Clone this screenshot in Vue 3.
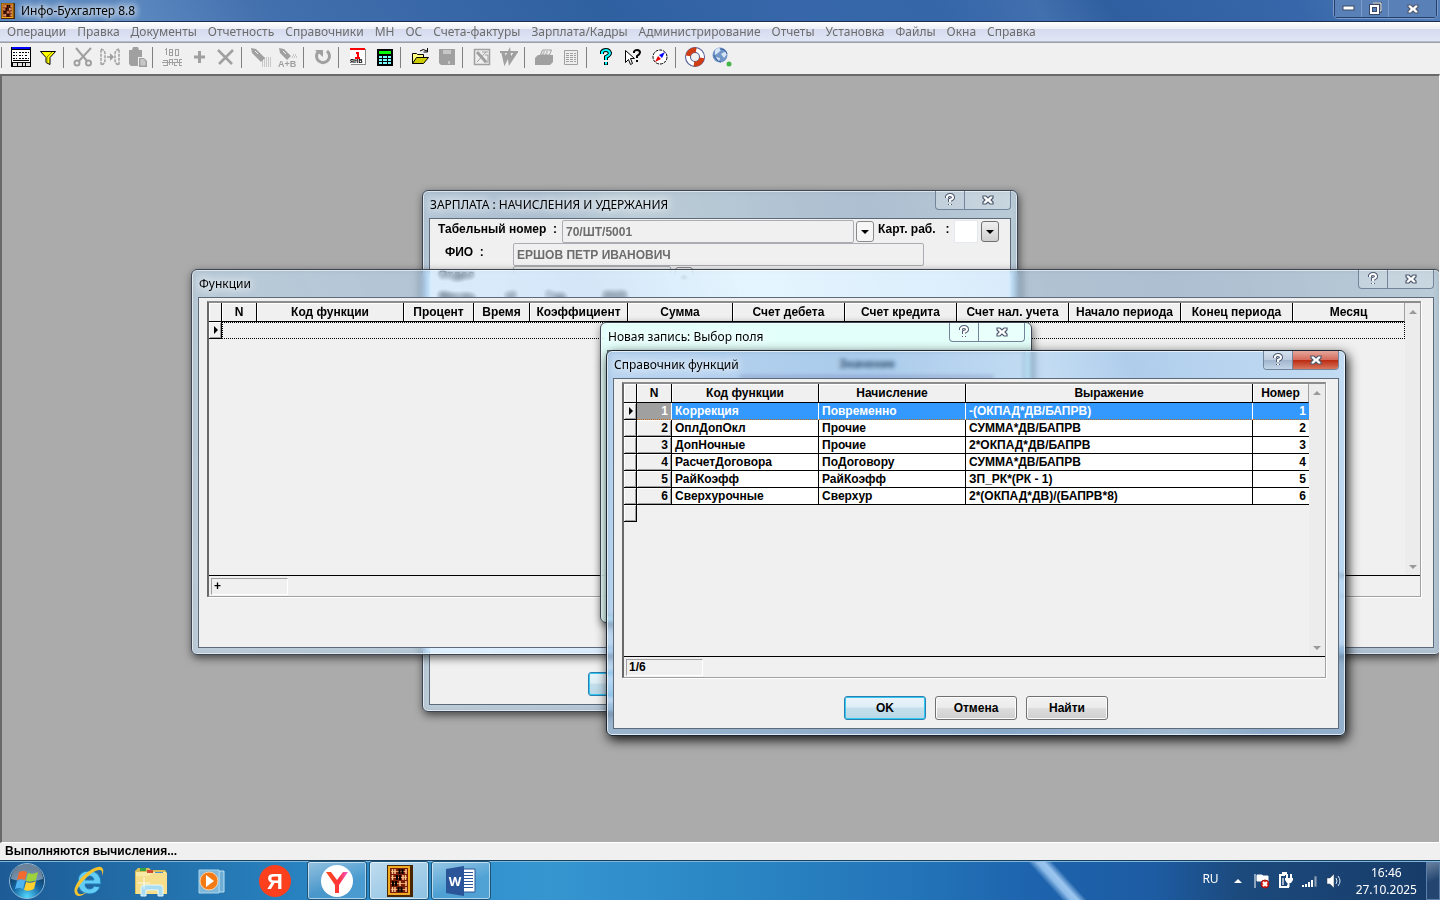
<template>
  <div class="desktop">
    <header class="app-title">
      <svg class="app-logo" viewBox="0 0 26 32" preserveAspectRatio="none" v-html="abacus"></svg>
      <h1>Инфо-Бухгалтер 8.8</h1>
      <div class="app-controls">
        <button aria-label="Свернуть">
          <svg width="13" height="7"><rect x="1" y="1" width="11" height="4" fill="#fff" stroke="#3b4865" /></svg>
        </button>
        <button aria-label="Восстановить">
          <svg width="13" height="13">
            <path d="M4 1h8v8h-2" fill="none" stroke="#3b4865" stroke-width="3" />
            <path d="M4 1h8v8h-2" fill="none" stroke="#fff" />
            <rect x="2" y="4" width="7" height="7" fill="none" stroke="#3b4865" stroke-width="4" />
            <rect x="2" y="4" width="7" height="7" fill="none" stroke="#fff" stroke-width="2" />
          </svg>
        </button>
        <button class="wide" aria-label="Закрыть">
          <svg width="14" height="12" viewBox="0 0 14 12" v-html="cross"></svg>
        </button>
      </div>
    </header>

    <nav class="menu">
      <a v-for="item in menu" :key="item" href="#">{{ item }}</a>
    </nav>

    <div class="toolbar">
      <div v-for="(group, g) in tools" :key="g" class="tool-group">
        <button v-for="tool in group" :key="tool.name" :aria-label="tool.name">
          <svg width="24" height="24" viewBox="0 0 24 24" v-html="tool.svg"></svg>
        </button>
      </div>
    </div>

    <main class="workspace">
      <!-- Payroll -->
      <section class="window payroll">
        <header class="win-title">
          <h2>ЗАРПЛАТА : НАЧИСЛЕНИЯ И УДЕРЖАНИЯ</h2>
          <div class="win-controls">
            <button aria-label="Справка"><svg width="12" height="14" viewBox="0 0 12 14" v-html="question"></svg></button>
            <button class="close" aria-label="Закрыть"><svg width="14" height="12" viewBox="0 0 14 12" v-html="cross"></svg></button>
          </div>
        </header>
        <div class="win-body">
          <div class="field-row">
            <label class="number-label" for="tabNumber">Табельный номер&nbsp; :</label>
            <input id="tabNumber" class="number-input" value="70/ШТ/5001" disabled />
            <button class="drop" aria-label="Выбрать номер"><i></i></button>
            <label class="card-label" for="card">Карт. раб.&nbsp;&nbsp; :</label>
            <input id="card" class="card-input" />
            <button class="drop pressed" aria-label="Выбрать карту"><i></i></button>
          </div>
          <div class="field-row">
            <label class="name-label" for="fio">ФИО&nbsp; :</label>
            <input id="fio" class="name-input" value="ЕРШОВ ПЕТР ИВАНОВИЧ" disabled />
          </div>
          <div class="field-row">
            <label class="dept-label" for="dept">Отдел</label>
            <input id="dept" class="dept-input" value=":" disabled />
            <button class="drop" aria-label="Выбрать отдел"><i></i></button>
          </div>
          <div class="field-row period">
            <span>Месяц</span><span>10</span><span>Год :</span><span>2025</span>
          </div>
          <button class="btn primary payroll-ok" aria-label="Записать"></button>
        </div>
      </section>

      <!-- Functions -->
      <section class="window functions">
        <header class="win-title">
          <h2>Функции</h2>
          <div class="win-controls">
            <button aria-label="Справка"><svg width="12" height="14" viewBox="0 0 12 14" v-html="question"></svg></button>
            <button class="close" aria-label="Закрыть"><svg width="14" height="12" viewBox="0 0 14 12" v-html="cross"></svg></button>
          </div>
        </header>
        <div class="win-body">
          <div class="grid-box">
            <div class="grid-main">
              <table>
                <colgroup>
                  <col style="width: 13px" />
                  <col v-for="col in functionCols" :key="col.name" :style="{ width: col.width + 'px' }" />
                </colgroup>
                <thead>
                  <tr>
                    <th></th>
                    <th v-for="col in functionCols" :key="col.name">{{ col.name }}</th>
                  </tr>
                </thead>
                <tbody>
                  <tr>
                    <td class="marker"><i></i></td>
                    <td class="empty-row" :colspan="functionCols.length"></td>
                  </tr>
                </tbody>
              </table>
              <div class="scrollbar"><i class="up"></i><i class="down"></i></div>
            </div>
            <div class="grid-status"><span>+</span></div>
          </div>
        </div>
      </section>

      <!-- New record -->
      <section class="window record">
        <header class="win-title">
          <h2>Новая запись: Выбор поля</h2>
          <div class="win-controls">
            <button aria-label="Справка"><svg width="12" height="14" viewBox="0 0 12 14" v-html="question"></svg></button>
            <button class="close" aria-label="Закрыть"><svg width="14" height="12" viewBox="0 0 14 12" v-html="cross"></svg></button>
          </div>
        </header>
        <div class="win-body">
          <div class="value-head">Значение</div>
        </div>
      </section>

      <!-- Function reference -->
      <section class="window reference">
        <header class="win-title">
          <h2>Справочник функций</h2>
          <div class="win-controls">
            <button aria-label="Справка"><svg width="12" height="14" viewBox="0 0 12 14" v-html="question"></svg></button>
            <button class="close red" aria-label="Закрыть"><svg width="14" height="12" viewBox="0 0 14 12" v-html="cross"></svg></button>
          </div>
        </header>
        <div class="win-body">
          <div class="grid-box">
            <div class="grid-main">
              <table>
                <colgroup>
                  <col style="width: 13px" />
                  <col v-for="col in referenceCols" :key="col.name" :style="{ width: col.width + 'px' }" />
                </colgroup>
                <thead>
                  <tr>
                    <th></th>
                    <th v-for="col in referenceCols" :key="col.name">{{ col.name }}</th>
                  </tr>
                </thead>
                <tbody>
                  <tr
                    v-for="(row, index) in rows"
                    :key="row.code"
                    :class="{ selected: index === current }"
                    @click="current = index"
                  >
                    <td class="marker"><i v-if="index === current"></i></td>
                    <td class="num">{{ index + 1 }}</td>
                    <td>{{ row.code }}</td>
                    <td>{{ row.kind }}</td>
                    <td>{{ row.expr }}</td>
                    <td class="right">{{ index + 1 }}</td>
                  </tr>
                  <tr>
                    <td class="marker"></td>
                    <td class="blank" colspan="5"></td>
                  </tr>
                </tbody>
              </table>
              <div class="scrollbar"><i class="up"></i><i class="down"></i></div>
            </div>
            <div class="grid-status"><span>{{ current + 1 }}/{{ rows.length }}</span></div>
          </div>
          <div class="actions">
            <button class="btn primary">OK</button>
            <button class="btn">Отмена</button>
            <button class="btn">Найти</button>
          </div>
        </div>
      </section>
    </main>

    <div class="status">Выполняются вычисления...</div>

    <footer class="taskbar">
      <button
        v-for="app in taskApps"
        :key="app.name"
        class="task"
        :class="app.state"
        :aria-label="app.name"
      >
        <svg width="40" height="38" viewBox="0 0 40 38" v-html="app.svg"></svg>
      </button>
      <div class="tray">
        <span class="lang">RU</span>
        <svg class="tray-arrow" width="8" height="4"><path d="M0 4L4 0L8 4z" fill="#fff" /></svg>
        <svg width="18" height="18" viewBox="0 0 18 18">
          <path d="M2 2v14M4 3h5l1 1h5v6h-5l-1-1H4z" fill="#fff" stroke="#fff" />
          <circle cx="12" cy="12" r="4" fill="#e3261b" stroke="#a01010" />
          <path d="M10 10l4 4M14 10l-4 4" stroke="#fff" stroke-width="2" />
        </svg>
        <svg width="18" height="18" viewBox="0 0 18 18">
          <path d="M8 3H3v12h8v-2M5 1h4v2" fill="none" stroke="#fff" stroke-width="2" />
          <path d="M5 6h2v7H5z" fill="#fff" opacity=".6" />
          <path d="M10 2v4M14 2v4M11.500 10v5" stroke="#fff" stroke-width="2" />
          <path d="M8 6h8v2l-2 3h-4L8 8z" fill="#fff" />
        </svg>
        <svg width="18" height="18" viewBox="0 0 18 18">
          <path d="M1 13h2v2H1zM4 12h2v3H4zM7 10h2v5H7zM10 8h2v7h-2z" fill="#fff" />
          <path d="M13.500 4.500h2v10h-2z" fill="#8fa4bd" stroke="#5e7797" />
        </svg>
        <svg width="18" height="18" viewBox="0 0 18 18">
          <path d="M2 6h3l4-4v14l-4-4H2z" fill="#fff" stroke="#33465f" stroke-width=".5" />
          <path d="M11 6q2 3 0 6M13 4q4 5 0 10" fill="none" stroke="#dfe9f5" />
        </svg>
        <div class="clock"><span>16:46</span><span>27.10.2025</span></div>
        <button class="peek" aria-label="Свернуть все окна"></button>
      </div>
    </footer>
  </div>
</template>

<script setup>
import { ref } from "vue";

const current = ref(0);

const menu = [
  "Операции", "Правка", "Документы", "Отчетность", "Справочники", "МН", "ОС", "Счета-фактуры",
  "Зарплата/Кадры", "Администрирование", "Отчеты", "Установка", "Файлы", "Окна", "Справка",
];

const functionCols = [
  { name: "N", width: 35 },
  { name: "Код функции", width: 147 },
  { name: "Процент", width: 70 },
  { name: "Время", width: 56 },
  { name: "Коэффициент", width: 98 },
  { name: "Сумма", width: 105 },
  { name: "Счет дебета", width: 112 },
  { name: "Счет кредита", width: 112 },
  { name: "Счет нал. учета", width: 112 },
  { name: "Начало периода", width: 112 },
  { name: "Конец периода", width: 112 },
  { name: "Месяц", width: 112 },
];

const referenceCols = [
  { name: "N", width: 35 },
  { name: "Код функции", width: 147 },
  { name: "Начисление", width: 147 },
  { name: "Выражение", width: 287 },
  { name: "Номер", width: 56 },
];

const rows = [
  { code: "Коррекция", kind: "Повременно", expr: "-(ОКПАД*ДВ/БАПРВ)" },
  { code: "ОплДопОкл", kind: "Прочие", expr: "СУММА*ДВ/БАПРВ" },
  { code: "ДопНочные", kind: "Прочие", expr: "2*ОКПАД*ДВ/БАПРВ" },
  { code: "РасчетДоговора", kind: "ПоДоговору", expr: "СУММА*ДВ/БАПРВ" },
  { code: "РайКоэфф", kind: "РайКоэфф", expr: "ЗП_РК*(РК - 1)" },
  { code: "Сверхурочные", kind: "Сверхур", expr: "2*(ОКПАД*ДВ)/(БАПРВ*8)" },
];

const cross = `
  <path d="M2 2h3l2 2 2-2h3v2l-2 2 2 2v2H9L7 8l-2 2H2V8l2-2-2-2z" fill="#fff" stroke="#4f5a70" stroke-width="1.200"/>`;

const question = `
  <path d="M3 5V3.500Q4 2 6 2q3 0 3 2.500Q9 6 6 7v2M6 11v1" fill="none" stroke="#4f5a70" stroke-width="4"/>
  <path d="M3 5V3.500Q4 2 6 2q3 0 3 2.500Q9 6 6 7v2M6 11v1" fill="none" stroke="#fff" stroke-width="2"/>`;

// four rods of beads inside a gold frame
const abacus = `
  <rect width="26" height="32" fill="#4a2500"/>
  <rect x="1" y="1" width="22" height="29" fill="#f0ac20"/>
  <rect x="3" y="3" width="18" height="25" fill="#7a1e08"/>
  <path d="M4 6.500h16M4 12.500h16M4 18.500h16M4 24.500h16" stroke="#e8a060"/>
  <path d="M5.500 4v5M8 4v5M19 4v5M5.500 10v5M16 10v5M18.500 10v5M13 16v5M19 16v5M5.500 22v5M8 22v5M19 22v5" stroke="#ffc890" stroke-width="1.500"/>
  <path d="M12.500 4v5M15.500 4v5M10 10v5M13 10v5M6 16v5M9 16v5M11.500 22v5M14.500 22v5" stroke="#000" stroke-width="2"/>`;

const tools = [
  [
    {
      name: "Журнал",
      svg: `<g shape-rendering="crispEdges"><rect x="2" y="2" width="20" height="20" fill="#000"/>
        <rect x="3" y="5" width="18" height="12" fill="#fff"/><rect x="3" y="2" width="18" height="2" fill="#00f"/>
        <path d="M4 7.500h4M10 7.500h5M16 7.500h4M4 10.500h4M10 10.500h4M16 10.500h3M4 13.500h4M10 13.500h5M16 13.500h4" stroke="#000" stroke-dasharray="2 1"/>
        <path d="M4 15.500h16" stroke="#000"/><path d="M4 18h4v3H4zM9 18h4v3H9zM14 18h2v3h-2zM17 18h4v3h-4z" fill="#ddd"/></g>`,
    },
    { name: "Фильтр", svg: `<path d="M4.500 6.500h15l-5.500 6v7l-4-2v-5z" fill="#ff0" stroke="#000"/><path d="M16 7l-5 5v6" stroke="#888800" fill="none"/>` },
  ],
  [
    { name: "Вырезать", svg: `<g fill="none" stroke="#a0a0a0" stroke-width="2"><path d="M5 3l11 13M20 3L8 16"/><circle cx="6" cy="18" r="2.500"/><circle cx="17.500" cy="18" r="2.500"/></g>` },
    { name: "Копировать", svg: `<g fill="none" stroke="#a0a0a0" stroke-width="1.500"><path d="M3 4q4 1 4 5v6q0 4-4 5zM21 4q-4 1-4 5v6q0 4 4 5z" stroke-dasharray="3 1"/><path d="M9 12h4"/></g><path d="M12 8l4 4-4 4z" fill="#a0a0a0"/>` },
    { name: "Вставить", svg: `<g fill="#a0a0a0"><path d="M4 5h3l1-3h5l1 3h3v7h-4v9H6l-2-2z"/><path d="M14 13h5l3 3v6h-8z"/></g><path d="M15 15h4M15 17h6M15 19h6M17 14v7M19 14v7" stroke="#efefef" stroke-width=".6"/>` },
  ],
  [
    { name: "Сумма прописью", svg: `<g fill="none" stroke="#a0a0a0" shape-rendering="crispEdges"><path d="M5 5l1-1v6M9 4h3v6H9zM9 7h3M15 4h3v6h-3z"/><path d="M3 15h4v5H3M9 20v-6h3v6M14 14h3v3h-3v3h3M19 14h3M19 14v6h3M2 17h20"/></g>` },
    { name: "Добавить", svg: `<path d="M7 12h11M12.500 6v12" stroke="#a0a0a0" stroke-width="3"/>` },
    { name: "Удалить", svg: `<path d="M4 5l14 14M19 5L5 19" stroke="#a0a0a0" stroke-width="2.500"/>` },
  ],
  [
    { name: "Найти", svg: `<path d="M2 3l5 1 9 9-4 4-9-9z" fill="#a0a0a0"/><path d="M6 6l3 3" stroke="#efefef"/><path d="M13 13h9M13 15h9M13 17h9M13 19h9M13 21h9" stroke="#a0a0a0" stroke-dasharray="1 1"/>` },
    { name: "Заменить", svg: `<path d="M3 3l5 1 7 7-4 4-7-7z" fill="#a0a0a0"/><path d="M7 6l3 3" stroke="#efefef"/><text x="2" y="22" font-family="Liberation Sans" font-size="9" font-weight="bold" fill="#a0a0a0">A+B</text><path d="M16 12h5M17 10h3" stroke="#a0a0a0" stroke-dasharray="1 1"/>` },
  ],
  [{ name: "Обновить", svg: `<path d="M7 7a6.500 6.500 0 1 0 9-1" fill="none" stroke="#a0a0a0" stroke-width="3"/><path d="M4 5h8v7z" fill="#a0a0a0"/>` }],
  [
    { name: "Календарь", svg: `<g shape-rendering="crispEdges"><path d="M5 4h15v16H5z" fill="#888"/><path d="M4 3h15v16H4z" fill="#fff"/><path d="M4 3h15v2H4z" fill="#f00"/><path d="M10 8h2v5M9 13h5" fill="none" stroke="#f00" stroke-width="2"/></g><text x="4" y="18" font-family="Liberation Sans" font-size="7" font-weight="bold">янв</text>` },
    { name: "Калькулятор", svg: `<g shape-rendering="crispEdges"><path d="M4 4h16v17H4z"/><path d="M6 6h12v3H6z" fill="#0f0"/><path d="M6 11h3v2H6zM10 11h4v2h-4zM15 11h3v2h-3zM6 14h3v2H6zM10 14h4v2h-4zM15 14h3v2h-3zM6 17h3v2H6zM10 17h4v2h-4zM15 17h3v2h-3z" fill="#7ff"/></g>` },
  ],
  [
    { name: "Открыть", svg: `<path d="M4.500 18.500V8.500h4l1 1h6v4" fill="#ffff80" stroke="#000"/><path d="M4.500 18.500l4-6h12l-5 6z" fill="#cccc00" stroke="#000"/><path d="M12 6q3-3 7 0M19.500 3v4h-4" fill="none" stroke="#000"/>` },
    { name: "Сохранить", svg: `<path d="M4 4h16v16H6l-2-2z" fill="#a0a0a0"/><path d="M8 6h8M8 8h8M14 16v3" stroke="#efefef"/>` },
  ],
  [
    { name: "Экспорт в Excel", svg: `<path d="M4.500 4.500h15v15h-15z" fill="#eee" stroke="#a0a0a0" stroke-width="1.500"/><path d="M7 7l9 10" stroke="#a0a0a0" stroke-width="3"/><path d="M16 7l-9 10M12 7h6M14 17h4M15 10h3v7" fill="none" stroke="#a0a0a0"/>` },
    { name: "Экспорт в Word", svg: `<path d="M3 7h8M10 7h6M16 7h5" stroke="#a0a0a0" stroke-width="2"/><path d="M6 7l2 9 4-8 1 8 6-9" fill="none" stroke="#a0a0a0" stroke-width="3.500"/>` },
  ],
  [
    { name: "Печать", svg: `<path d="M3 13l3-3h15v7l-3 3H3z" fill="#a0a0a0"/><path d="M8.500 10l2-5h9l-2 5z" fill="#eee" stroke="#a0a0a0"/><path d="M11 7h6M10 9h6" stroke="#a0a0a0" stroke-dasharray="2 1"/>` },
    { name: "Просмотр", svg: `<path d="M5.500 5.500h13v14h-13z" fill="#eee" stroke="#a0a0a0"/><path d="M7 8.500h10M7 10.500h10M7 12.500h10M7 14.500h10M7 16.500h10" stroke="#a0a0a0" stroke-dasharray="3 1"/>` },
  ],
  [
    { name: "Помощь", svg: `<path d="M8 9V7q1-2 4-2t4 3q0 2-4 4v3M12 17v3" fill="none" stroke="#000" stroke-width="4"/><path d="M8 9V7q1-2 4-2t4 3q0 2-4 4v3M12 17v2.500" fill="none" stroke="#0ff" stroke-width="2"/>` },
    { name: "Что это", svg: `<path d="M4.500 5.500v12l3-3 2 5 2-1-2-5h4z" fill="#fff" stroke="#000"/><path d="M13 8V6.500Q14 5 16 5q3 0 3 2.500Q19 9 16 11v2M16 15v2" fill="none" stroke="#000" stroke-width="2"/>` },
    { name: "Компас", svg: `<circle cx="12" cy="12" r="7" fill="#fff" stroke="#000" stroke-dasharray="3 1"/><path d="M17 7l-3 6-3-3z" fill="#00f"/><path d="M7 17l3-6 3 3z" fill="#e00"/>` },
  ],
  [
    { name: "Поддержка", svg: `<circle cx="12" cy="12" r="7" fill="none" stroke="#4a5694" stroke-width="6"/><circle cx="12" cy="12" r="7" fill="none" stroke="#fff" stroke-width="4"/><circle cx="12" cy="12" r="7" fill="none" stroke="#d03c14" stroke-width="5" stroke-dasharray="11 11" stroke-dashoffset="-1"/>` },
    { name: "Интернет", svg: `<circle cx="10" cy="10" r="7.500" fill="#7195c6"/><path d="M5 5q4-4 6 0l-3 3-3 2zM11 9q5-4 6 0l-3 4zM6 12l4 1-1 4z" fill="#d6e5f5"/><path d="M10 4q6 0 7 5M4 10q2 6 7 7" fill="none" stroke="#355c9c"/><circle cx="19" cy="19" r="2.500" fill="#43b54a"/>` },
  ],
];

const taskApps = [
  {
    name: "Пуск",
    svg: `<defs><radialGradient id="orb" cx=".5" cy=".95" r=".8"><stop offset="0" stop-color="#52d8ff"/><stop offset=".5" stop-color="#1769a5"/><stop offset="1" stop-color="#0c3157"/></radialGradient></defs>
      <circle cx="20" cy="19" r="17.500" fill="url(#orb)" stroke="#8fb9d4"/><path d="M4 17a16 15 0 0 1 32 0q-16 5-32 0" fill="#fff" opacity=".4"/>
      <path d="M12 10q4-2 8 0l-2 8q-4-2-8 0z" fill="#f26a2e"/><path d="M21 11q5 2 10-1l-2 8q-5 3-10 1z" fill="#9ed13c"/>
      <path d="M10 19q4-2 8 0l-2 8q-4-2-8 0z" fill="#4fb3f2"/><path d="M19 20q5 2 10-1l-2 8q-5 3-10 1z" fill="#ffd02e"/>`,
  },
  {
    name: "Internet Explorer",
    svg: `<path d="M31 25q-3 7-11 7-11-1-11-12T20 9q12 0 12 13H16q0 5 5 5 3 0 4-3zM16 18h9q-1-4-4-4-4 0-5 4z" fill="#63cdf6" stroke="#217db8"/>
      <path d="M7 33q-5-6 6-18Q26 3 32 5q4 2 1 9 1-6-2-6-6-1-17 11Q6 28 9 31q2 3 9-1-7 6-11 3z" fill="#f4c430"/>`,
  },
  {
    name: "Проводник",
    svg: `<path d="M4 9l3-3h11l2 2h14l2 3v21H4z" fill="#d9bd5a"/><path d="M5 10h30v20H5z" fill="#f9e9a6"/><path d="M9 6h6v3H9z" fill="#35a244"/><path d="M16 8h6v3h-6z" fill="#cf4934"/><path d="M24 10h8v2h-8z" fill="#4d91d0"/>
      <path d="M5 14h14l2-3h15v21H5z" fill="#f5df8c"/><path d="M10 34V26q0-3 3-3h16q3 0 3 3v8h-5v-6H15v6z" fill="#a9def2" stroke="#e7f8fc"/><path d="M13 15v12M7 21h12" stroke="#fff" opacity=".8"/>`,
  },
  {
    name: "Проигрыватель",
    svg: `<path d="M26 9h5v21h-5z" fill="#6eaed5" stroke="#bde0f2"/><path d="M6 8h20v23H6z" fill="#7fb8da" stroke="#a8d7ed"/><circle cx="16" cy="19" r="9" fill="#f47a16" stroke="#ffd0a0"/><path d="M13 13l8 6-8 6z" fill="#fff"/>`,
  },
  {
    name: "Яндекс",
    svg: `<circle cx="20" cy="19" r="16" fill="#fc3f1d"/><text x="20" y="27" text-anchor="middle" font-family="Liberation Sans" font-size="22" font-weight="bold" fill="#fff">Я</text>`,
  },
  {
    name: "Яндекс Браузер",
    state: "running",
    svg: `<defs><linearGradient id="ya"><stop stop-color="#ff4a18"/><stop offset=".6" stop-color="#ff343b"/><stop offset="1" stop-color="#f35bd8"/></linearGradient></defs>
      <circle cx="20" cy="19" r="16" fill="#fff"/><path d="M9 10h5l6 8 6-8h5l-9 13v8h-4v-8z" fill="url(#ya)"/>`,
  },
  { name: "Инфо-Бухгалтер", state: "running active", svg: `<g transform="translate(8 3)">${abacus}</g>` },
  {
    name: "Word",
    state: "running",
    svg: `<path d="M22 7h12v23H22z" fill="#fff" stroke="#2a5699"/><path d="M23 10.500h9M23 13.500h9M23 16.500h9M23 19.500h9M23 22.500h9M23 25.500h9" stroke="#2a5699"/><path d="M5 7l18-3v30L5 31z" fill="#2a5699"/><text x="14" y="24" text-anchor="middle" font-family="Open Sans" font-size="13" font-weight="bold" fill="#fff">W</text>`,
  },
];
</script>

<style>
body {
  margin: 0;
  overflow: hidden;
}
</style>

<style scoped>
.desktop {
  height: 100vh;
  display: flex;
  flex-direction: column;
  background: #f0f0f0;
  font-family: "Noto Sans", "Open Sans", sans-serif;
  font-size: 12px;
  color: #000;
}

button {
  padding: 0;
  margin: 0;
  border: none;
  background: none;
  font: inherit;
  color: inherit;
}

svg {
  display: block;
}

h1,
h2 {
  margin: 0;
  font-size: 12px;
  font-weight: normal;
}

/* application frame */
.app-title {
  height: 21px;
  display: flex;
  align-items: center;
  border-bottom: 1px solid #1b2e50;
  background: linear-gradient(60deg, #5b88bf 0, #5b88bf 120px, #426fad 240px, #3968a8 30%, #2f60a0 42%, #3767aa 55%, #3466a8 65%, #426fae 72%, #2f5f9f 77%, #3767aa 90%, #5580ba 100%);
}

.app-logo {
  width: 14px;
  height: 16px;
  margin: 0 6px 0 1px;
}

.app-title h1 {
  text-shadow: 0 0 6px #fff, 0 0 8px #fff, 0 0 10px #fff;
}

.app-controls {
  display: flex;
  align-self: flex-start;
  margin-left: auto;
  margin-right: 3px;
  border: 1px solid #233f6d;
  border-top: none;
  border-radius: 0 0 4px 4px;
  box-shadow: 0 0 0 1px #7d9bc8;
}

.app-controls button {
  width: 27px;
  height: 17px;
  display: flex;
  align-items: center;
  justify-content: center;
  border-right: 1px solid #7d9bc8;
  background: #5a80b8;
}

.app-controls .wide {
  width: 47px;
  border-right: none;
}

.menu {
  height: 19px;
  display: flex;
  align-items: center;
  gap: 11px;
  padding: 0 7px;
  white-space: nowrap;
  border-bottom: 1px solid #b5bbd0;
  background: linear-gradient(#fff 0, #eef0f7 35%, #d5dbed 36%, #e1e6f6 100%);
}

.menu a {
  color: #6d6d6d;
  text-decoration: none;
}

.toolbar {
  box-sizing: border-box;
  height: 32px;
  display: flex;
  align-items: center;
  border-top: 1px solid #a0a0a0;
  padding: 0 1px 3px;
}

.tool-group {
  display: flex;
  align-items: center;
}

.tool-group::before {
  content: "";
  width: 1px;
  height: 21px;
  margin: 0 5px 0 2px;
  background: #808080;
}

.tool-group:first-child::before {
  margin-left: 0;
}

.tool-group button {
  width: 27px;
  height: 24px;
  display: flex;
  justify-content: center;
}

.workspace {
  flex: 1;
  position: relative;
  overflow: hidden;
  border: 2px solid #696969;
  border-right: 1px solid #fff;
  border-bottom: 1px solid #fff;
  background: #ababab;
}

.status {
  height: 17px;
  padding-left: 5px;
  font: bold 12px/17px "Liberation Sans", Arial, sans-serif;
}

/* windows */
.window {
  position: absolute;
  box-sizing: border-box;
  display: flex;
  flex-direction: column;
  padding: 0 6px 6px;
  border: 1px solid #3c4654;
  border-radius: 6px;
  background: linear-gradient(70deg, rgba(130, 200, 255, 0.22) 0, rgba(90, 180, 255, 0.2) 20%, rgba(60, 140, 220, 0.22) 38%, rgba(120, 205, 255, 0.2) 50%, rgba(60, 140, 225, 0.22) 80%, rgba(110, 200, 255, 0.2) 100%);
  backdrop-filter: blur(3px) brightness(1.2);
  box-shadow: inset 0 0 0 1px rgba(255, 255, 255, 0.6), 1px 3px 8px rgba(0, 0, 0, 0.6);
}

.payroll {
  left: 420px;
  top: 114px;
  width: 596px;
  height: 522px;
}

.functions {
  left: 189px;
  top: 193px;
  width: 1250px;
  height: 386px;
}

.record {
  left: 598px;
  top: 246px;
  width: 432px;
  height: 301px;
  background: rgba(200, 255, 245, 0.5);
}

.reference {
  left: 604px;
  top: 274px;
  width: 740px;
  height: 386px;
  border-color: #1c2733;
  background: linear-gradient(70deg, rgba(140, 190, 240, 0.5) 0, rgba(100, 165, 230, 0.5) 45%, rgba(150, 200, 245, 0.5) 65%, rgba(110, 170, 230, 0.5) 75%, rgba(150, 200, 245, 0.5) 100%);
  backdrop-filter: blur(2px);
  box-shadow: inset 0 0 0 1px rgba(255, 255, 255, 0.7), 2px 4px 12px rgba(0, 0, 0, 0.9);
}

.win-title {
  height: 27px;
  flex: none;
  display: flex;
  align-items: center;
}

.win-title h2 {
  padding-left: 1px;
  white-space: nowrap;
  text-shadow: 0 0 8px #fff, 0 0 10px #fff;
}

.win-controls {
  display: flex;
  align-self: flex-start;
  margin-left: auto;
  border: 1px solid #74849a;
  border-top: none;
  border-radius: 0 0 4px 4px;
  overflow: hidden;
}

.win-controls button {
  width: 28px;
  height: 18px;
  display: flex;
  align-items: center;
  justify-content: center;
  background: rgba(255, 255, 255, 0.2);
}

.win-controls .close {
  width: 46px;
  border-left: 1px solid #74849a;
}

.reference .win-controls button {
  background: linear-gradient(#d5e2f0 0, #bccbdd 50%, #9fb4cc 50%, #c2d4e8 100%);
}

.reference .win-controls .red {
  background: linear-gradient(#e5a79b 0, #d6695a 50%, #b9280f 50%, #d8755c 100%);
}

.win-body {
  flex: 1;
  display: flex;
  flex-direction: column;
  min-height: 0;
  border: 1px solid #5c6a7a;
  background: #f0f0f0;
  font-family: "Liberation Sans", Arial, sans-serif;
  font-weight: bold;
  font-size: 13px;
}

/* payroll form */
.payroll .win-body {
  padding: 1px 0 0 1px;
}

.field-row {
  height: 23px;
  flex: none;
  display: flex;
  align-items: center;
  font-size: 12px;
}

.field-row label {
  flex: none;
  white-space: nowrap;
  padding-bottom: 5px;
  box-sizing: border-box;
}

.field-row input {
  box-sizing: border-box;
  height: 23px;
  padding: 0 3px;
  border: 1px solid #abadb3;
  border-radius: 2px;
  background: #f0f0f0;
  color: #6d6d6d;
  font: inherit;
}

.field-row .card-input {
  width: 24px;
  margin-right: 3px;
  border-color: #e3e9ef;
  background: #fff;
}

.number-label {
  width: 131px;
  padding-left: 7px;
}

.number-input {
  width: 292px;
  margin-right: 2px;
}

.card-label {
  width: 80px;
  padding-left: 4px;
}

.name-label {
  width: 82px;
  padding-left: 14px;
}

.name-input {
  width: 411px;
}

.dept-label {
  width: 82px;
  padding-left: 7px;
}

.dept-input {
  width: 158px;
  margin-right: 4px;
}

.field-row.period {
  align-items: flex-start;
  gap: 28px;
  padding-left: 7px;
  line-height: 14px;
}

.drop {
  width: 18px;
  height: 21px;
  flex: none;
  display: flex;
  align-items: center;
  justify-content: center;
  border: 1px solid #8a8a8a;
  border-radius: 3px;
  background: #f6f6f6;
}

.drop.pressed {
  border-color: #707070;
  background: linear-gradient(#f0f0f0, #cfcfcf);
}

.drop i {
  border: 4px solid transparent;
  border-top-color: #000;
  border-bottom: none;
}

.payroll-ok {
  margin: auto 0 8px 157px;
}

/* grids */
.grid-box {
  flex: none;
  height: 293px;
  display: flex;
  flex-direction: column;
  margin: 3px 12px 0 8px;
  border: 1px solid #a0a0a0;
  border-top: 2px solid #8c8c8c;
  border-left: 2px solid #696969;
  box-shadow: 1px 1px 0 #fff;
}

.grid-main {
  flex: 1;
  min-height: 0;
  display: flex;
  justify-content: space-between;
  border-bottom: 1px solid #000;
}

table {
  flex: none;
  width: 0;
  align-self: flex-start;
  table-layout: fixed;
  border-collapse: separate;
  border-spacing: 0;
  font-size: 12px;
  line-height: 16px;
}

th,
td {
  box-sizing: border-box;
  height: 17px;
  padding: 0 3px;
  border-right: 1px solid #000;
  border-bottom: 1px solid #000;
  white-space: nowrap;
}

th {
  height: 19px;
  padding: 0 0 1px;
  box-shadow: inset 1px 1px 0 #fff;
}

th:last-child {
  border-right-color: #a0a0a0;
}

td {
  background: #fff;
}

td:last-child {
  border-right: none;
}

.right,
.num {
  text-align: right;
}

.num {
  background: #f0f0f0;
  box-shadow: inset 1px 1px 0 #fff, inset -1px -1px 0 #a0a0a0;
}

.marker {
  padding: 0 0 0 5px;
  background: #f0f0f0;
  box-shadow: inset 1px 1px 0 #fff, inset -1px -1px 0 #a0a0a0;
}

.marker i {
  display: block;
  width: 0;
  border: 4px solid transparent;
  border-left-color: #000;
  border-right: none;
}

.selected td:not(.marker) {
  background: #3399ff;
  color: #fff;
  border-right-color: #fff;
  border-bottom: 1px dotted #c46a1a;
}

.selected td.num {
  background: #a0a0a0;
  border-right-color: #fff;
  box-shadow: none;
}

td.blank {
  border: none;
  background: none;
}

td.empty-row {
  border: 1px dotted #000;
  background: none;
}

.scrollbar {
  width: 16px;
  display: flex;
  flex-direction: column;
  align-items: center;
  justify-content: space-between;
  padding: 7px 0 6px;
  box-sizing: border-box;
  background: #ececec;
}

.scrollbar i {
  border: 4px solid transparent;
}

.scrollbar .up {
  border-top: none;
  border-bottom-color: #9a9a9a;
}

.scrollbar .down {
  border-bottom: none;
  border-top-color: #9a9a9a;
}

.grid-status {
  height: 20px;
  display: flex;
  align-items: center;
  padding-left: 2px;
}

.grid-status span {
  width: 73px;
  height: 15px;
  padding-left: 2px;
  line-height: 15px;
  font-size: 12px;
  border: 1px solid #a0a0a0;
  border-right-color: #fff;
  border-bottom-color: #fff;
}

.value-head {
  width: 254px;
  height: 25px;
  margin-left: 132px;
  border-bottom: 2px solid #8a7090;
  text-align: center;
  line-height: 26px;
  font-size: 12px;
}

.actions {
  display: flex;
  justify-content: center;
  gap: 9px;
  padding-top: 18px;
}

.btn {
  box-sizing: border-box;
  width: 82px;
  height: 24px;
  border: 1px solid #707070;
  border-radius: 3px;
  background: linear-gradient(#f2f2f2 0, #ebebeb 50%, #dddddd 50%, #cfcfcf 100%);
  box-shadow: inset 0 0 0 1px #fcfcfc;
  font-size: 12px;
}

.btn.primary {
  border-color: #2d7fb0;
  background: linear-gradient(#eaf4f9 0, #deeef6 45%, #c4dfeb 50%, #b8d8e6 100%);
  box-shadow: inset 0 0 0 1px #30c8f5;
}

/* taskbar */
.taskbar {
  height: 39px;
  display: flex;
  border-top: 1px solid #173f5f;
  box-shadow: inset 0 1px 0 #7fb6da;
  background: linear-gradient(90deg, #1d5b96 0, #2372ad 12%, #2a8ac8 25%, #3596d0 38%, #2b87c4 50%, #2373b8 64%, #1d63ad 72%, #1d5ca3 80%, #1c4a7d 86%, #173b68 100%);
}

.task {
  box-sizing: border-box;
  width: 60px;
  height: 39px;
  margin-right: 2px;
  display: flex;
  align-items: center;
  justify-content: center;
  border: 1px solid transparent;
}

.task:first-child {
  width: 54px;
  margin-right: 5px;
}

.task.running {
  border-color: #1d5478;
  border-radius: 3px;
  background: linear-gradient(160deg, rgba(255, 255, 255, 0.5), rgba(255, 255, 255, 0.15) 60%);
  box-shadow: inset 0 0 0 1px rgba(255, 255, 255, 0.55);
}

.task.active {
  background: linear-gradient(150deg, rgba(255, 255, 255, 0.7), rgba(255, 255, 255, 0.45));
}

.tray {
  flex: 1;
  display: flex;
  align-items: center;
  justify-content: flex-end;
  gap: 6px;
  color: #fff;
}

/* light ray of the wallpaper showing through the bar */
.tray::before {
  content: "";
  width: 80px;
  height: 39px;
  margin-right: 98px;
  background: linear-gradient(48deg, transparent 38%, #8fbdea 46%, #9cc6ef 52%, transparent 60%);
}

.lang {
  margin-right: 9px;
  padding-bottom: 4px;
}

.tray-arrow {
  margin-right: 5px;
}

.clock {
  display: flex;
  flex-direction: column;
  align-items: center;
  margin: 0 3px 0 7px;
  line-height: 17px;
}

.peek {
  width: 14px;
  height: 38px;
  border: 1px solid #5b7fa6;
  background: linear-gradient(160deg, rgba(255, 255, 255, 0.35), rgba(255, 255, 255, 0.05) 50%);
}
</style>
